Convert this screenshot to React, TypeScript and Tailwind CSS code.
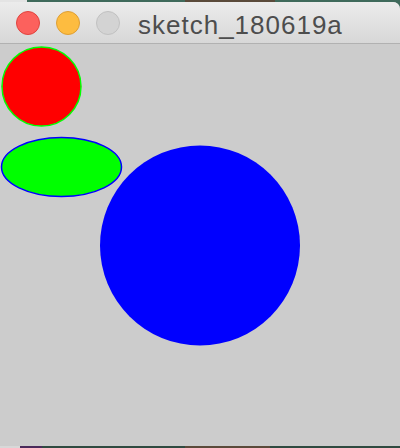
export default function App() {
  return (
    <div className="w-[400px] h-[448px] flex flex-col overflow-hidden bg-[#cccccc]" style={{ fontFamily: '"Liberation Sans", Arial, sans-serif' }}>
      {/* desktop peeking above the window */}
      <div className="h-[2px] flex shrink-0">
        <div className="w-[27px] bg-[#e4e4e4]" />
        <div className="w-[158px] bg-[#3f6a5b]" />
        <div className="w-[90px] bg-[#5a4a3a]" />
        <div className="flex-1 bg-[#3f6a5b]" />
      </div>

      {/* window */}
      <div className="flex-1 flex flex-col bg-[#3f6a5b]">
        <div className="flex-1 flex flex-col rounded-tr-[7px] overflow-hidden bg-[#cccccc]">
          {/* title bar */}
          <div className="h-[42px] shrink-0 flex items-center bg-gradient-to-b from-[#ececec] to-[#d7d7d7] border-b border-[#b1b1b1]">
            <div className="flex items-center gap-[16px] pl-[16px]">
              <span className="w-[24px] h-[24px] rounded-full bg-[#fc615d] border border-[#e0443e]" />
              <span className="w-[24px] h-[24px] rounded-full bg-[#fdbc40] border border-[#de9f34]" />
              <span className="w-[24px] h-[24px] rounded-full bg-[#d3d3d3] border border-[#c1c1c1]" />
            </div>
            <span className="ml-[18px] mt-[4px] text-[26px] tracking-[1px] leading-none text-[#4d4d4d]">sketch_180619a</span>
          </div>

          {/* sketch canvas */}
          <div className="flex-1 bg-[#cccccc]">
            <svg width="400" height="402" viewBox="0 0 400 402">
              <circle cx="41.5" cy="42.5" r="39.5" fill="#ff0000" stroke="#00ff00" strokeWidth="1.5" />
              <ellipse cx="61.5" cy="123" rx="60" ry="29.5" fill="#00ff00" stroke="#0000ff" strokeWidth="1.5" />
              <circle cx="200" cy="201.5" r="100" fill="#0000ff" />
            </svg>
          </div>
        </div>
      </div>

      {/* desktop peeking below */}
      <div className="h-[2px] flex shrink-0">
        <div className="w-[20px] bg-[#d8d8d8]" />
        <div className="w-[22px] bg-[#4a2a5a]" />
        <div className="w-[143px] bg-[#2f4a40]" />
        <div className="w-[85px] bg-[#5a4a3a]" />
        <div className="flex-1 bg-[#2f4a40]" />
      </div>
    </div>
  );
}
